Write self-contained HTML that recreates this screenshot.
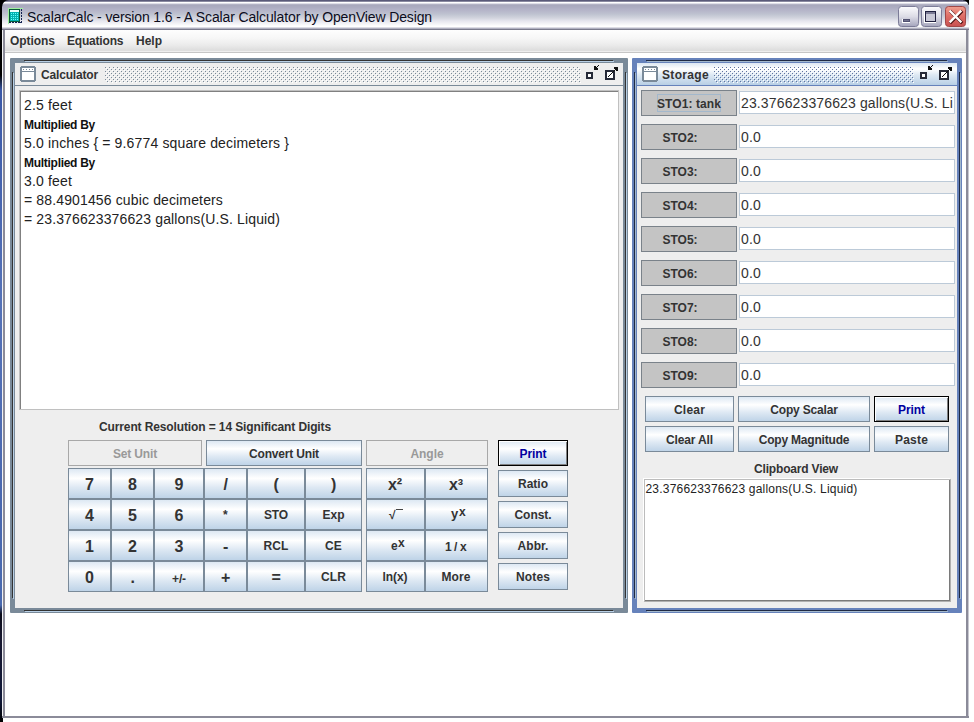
<!DOCTYPE html>
<html><head><meta charset="utf-8">
<style>
*{box-sizing:border-box;margin:0;padding:0}
html,body{width:974px;height:722px;overflow:hidden;background:#fff;font-family:"Liberation Sans",sans-serif;position:relative}
.a{position:absolute}
.t{position:absolute;white-space:nowrap}
</style></head><body>
<div class="a" style="left:0px;top:0px;width:3px;height:722px;background:linear-gradient(#000 0,#000 75px,#3a58a8 90px,#5572b8 300px,#4a68b0 500px,#4a6ab0 605px,#0a0a18 614px,#181830 640px,#101838 700px,#000 722px)"></div>
<div class="a" style="left:0px;top:0px;width:10px;height:8px;background:#000"></div>
<div class="a" style="left:963px;top:0px;width:6px;height:5px;background:#000"></div>
<div class="a" style="left:969px;top:0px;width:5px;height:722px;background:#fff"></div>
<div class="a" style="left:2px;top:0;width:967px;height:30px;border-radius:7px 7px 0 0;background:linear-gradient(#5a5a78 0px,#5a5a78 1px,#8a8aa0 1px,#8a8aa0 2px,#ffffff 2px,#ffffff 3px,#e0e0e8 3px,#e0e0e8 4px,#b8b8c8 4px,#a9a9bd 5.5px,#acacc0 7px,#b4b4c8 10px,#bec2d0 14px,#d2d4de 18px,#e6e6ee 21px,#f4f4f7 24px,#ffffff 26px,#ffffff 27px,#dcdce4 27px,#dcdce4 28px,#b0b0c0 28px,#b0b0c0 29px,#7a7a8c 29px,#7a7a8c 30px)"></div>
<div class="t" style="left:27px;top:8px;font-size:14px;line-height:18px;color:#0c0c1c;letter-spacing:-0.134px;">ScalarCalc - version 1.6 - A Scalar Calculator by OpenView Design</div>
<svg class="a" style="left:7px;top:7px" width="18" height="18" shape-rendering="crispEdges"><rect x="1" y="1" width="1" height="16" fill="#a0f0a0"/><rect x="1" y="1" width="15" height="1" fill="#a0f0a0"/><rect x="2" y="2" width="11" height="13" fill="#0a5a3a"/><rect x="3" y="3" width="9" height="2" fill="#e8ffff"/><rect x="3" y="5" width="9" height="9" fill="#00b0b0"/><path d="M4 6h1v1h-1zM6 6h1v1h-1zM8 6h1v1h-1zM10 6h1v1h-1zM4 8h1v1h-1zM6 8h1v1h-1zM8 8h1v1h-1zM10 8h1v1h-1zM4 10h1v1h-1zM6 10h1v1h-1zM8 10h1v1h-1zM10 10h1v1h-1zM4 12h1v1h-1zM6 12h1v1h-1zM8 12h1v1h-1zM10 12h1v1h-1z" fill="#60ffff"/><path d="M14 2h1v2h-1zM14 5h1v2h-1zM14 8h1v2h-1zM14 11h1v2h-1zM14 14h1v2h-1zM2 15h2v1h-2zM5 15h2v1h-2zM8 15h2v1h-2zM11 15h3v1h-3z" fill="#102050"/></svg>
<svg class="a" style="left:898px;top:6px" width="21" height="21"><defs><linearGradient id="gsil" x1="0" y1="0" x2="0" y2="1"><stop offset="0" stop-color="#fcfcfe"/><stop offset="0.5" stop-color="#dcdce6"/><stop offset="1" stop-color="#a4a4bc"/></linearGradient><linearGradient id="gclose" x1="0" y1="0" x2="0" y2="1"><stop offset="0" stop-color="#f0a090"/><stop offset="0.45" stop-color="#e07068"/><stop offset="1" stop-color="#c85050"/></linearGradient></defs><rect x="0.5" y="0.5" width="20" height="20" rx="3" fill="url(#gsil)" stroke="#7c7c98"/><rect x="4" y="13" width="8" height="4" fill="#fff"/><rect x="5" y="13" width="7" height="3" fill="#505070"/><rect x="6" y="14" width="5" height="1" fill="#70708c"/></svg>
<svg class="a" style="left:921px;top:6px" width="21" height="21"><defs><linearGradient id="gsil" x1="0" y1="0" x2="0" y2="1"><stop offset="0" stop-color="#fcfcfe"/><stop offset="0.5" stop-color="#dcdce6"/><stop offset="1" stop-color="#a4a4bc"/></linearGradient><linearGradient id="gclose" x1="0" y1="0" x2="0" y2="1"><stop offset="0" stop-color="#f0a090"/><stop offset="0.45" stop-color="#e07068"/><stop offset="1" stop-color="#c85050"/></linearGradient></defs><rect x="0.5" y="0.5" width="20" height="20" rx="3" fill="url(#gsil)" stroke="#7c7c98"/><rect x="3" y="5" width="12" height="12" fill="#fff"/><rect x="4" y="5" width="11" height="11" fill="#202040"/><rect x="5" y="6" width="9" height="2" fill="#7a7a94"/><rect x="5" y="8" width="9" height="7" fill="#c8c8d6"/></svg>
<svg class="a" style="left:945px;top:6px" width="21" height="21"><defs><linearGradient id="gsil" x1="0" y1="0" x2="0" y2="1"><stop offset="0" stop-color="#fcfcfe"/><stop offset="0.5" stop-color="#dcdce6"/><stop offset="1" stop-color="#a4a4bc"/></linearGradient><linearGradient id="gclose" x1="0" y1="0" x2="0" y2="1"><stop offset="0" stop-color="#f0a090"/><stop offset="0.45" stop-color="#e07068"/><stop offset="1" stop-color="#c85050"/></linearGradient></defs><rect x="0.5" y="0.5" width="20" height="20" rx="3" fill="url(#gclose)" stroke="#a04848"/><path d="M5.5 5.5L15.5 15.5M15.5 5.5L5.5 15.5" stroke="#4a1010" stroke-width="3.2" stroke-linecap="square" transform="translate(0.6,0.6)"/><path d="M5.5 5.5L15.5 15.5M15.5 5.5L5.5 15.5" stroke="#fff" stroke-width="2.4" stroke-linecap="square"/></svg>
<div class="a" style="left:2px;top:30px;width:3px;height:688px;background:#8b8b99;border-left:1px solid #f2f2f4"></div>
<div class="a" style="left:966px;top:30px;width:3px;height:688px;background:#8b8b99;border-right:1px solid #c8c8d0"></div>
<div class="a" style="left:2px;top:716px;width:967px;height:2px;background:#8b8b99"></div>
<div class="a" style="left:5px;top:30px;width:961px;height:23px;background:linear-gradient(#fefefe 0px,#f7f7f7 8px,#ebebeb 15px,#dedede 20px,#dedede 21px,#eeeeee 21px,#eeeeee 22px);border-bottom:1px solid #c6c6c6"></div>
<div class="t" style="left:10px;top:33px;font-size:12px;line-height:16px;font-weight:bold;color:#333;letter-spacing:-0.047px;">Options</div>
<div class="t" style="left:67px;top:33px;font-size:12px;line-height:16px;font-weight:bold;color:#333;letter-spacing:-0.193px;">Equations</div>
<div class="t" style="left:136px;top:33px;font-size:12px;line-height:16px;font-weight:bold;color:#333;letter-spacing:-0.001px;">Help</div>
<div class="a" style="left:5px;top:53px;width:961px;height:663px;background:#fff"></div>
<div class="a" style="left:10px;top:58px;width:618px;height:555px;background:#7a8a99;border-radius:1px"></div>
<div class="a" style="left:24px;top:60px;width:589px;height:1px;background:#333333"></div>
<div class="a" style="left:12px;top:72px;width:1px;height:526px;background:#333333"></div>
<div class="a" style="left:625px;top:72px;width:1px;height:526px;background:#333333"></div>
<div class="a" style="left:24px;top:610px;width:589px;height:1px;background:#333333"></div>
<div class="a" style="left:25px;top:61px;width:589px;height:1px;background:#b8cfe5"></div>
<div class="a" style="left:13px;top:73px;width:1px;height:526px;background:#b8cfe5"></div>
<div class="a" style="left:626px;top:73px;width:1px;height:526px;background:#b8cfe5"></div>
<div class="a" style="left:25px;top:611px;width:589px;height:1px;background:#b8cfe5"></div>
<div class="a" style="left:15px;top:63px;width:608px;height:545px;background:#eeeeee"></div>
<div class="a" style="left:15px;top:63px;width:608px;height:22px;background:#eeeeee"></div>
<div class="a" style="left:15px;top:85px;width:608px;height:1px;background:#7a8a99"></div>
<svg class="a" style="left:20px;top:66px" width="16" height="16" shape-rendering="crispEdges"><path d="M1 0h14v1h1v14h-1v1h-14v-1h-1v-14h1z" fill="#7a8a99"/><rect x="2" y="2" width="12" height="3" fill="#fff"/><rect x="2" y="6" width="12" height="8" fill="#fff"/><rect x="3" y="3" width="1" height="1" fill="#7a8a99"/><rect x="6" y="3" width="1" height="1" fill="#7a8a99"/><rect x="9" y="3" width="1" height="1" fill="#7a8a99"/><rect x="12" y="3" width="1" height="1" fill="#7a8a99"/></svg>
<div class="t" style="left:41px;top:67px;font-size:12px;line-height:16px;font-weight:bold;color:#333;letter-spacing:-0.176px;">Calculator</div>
<svg class="a" style="left:584px;top:63px" width="36" height="20" shape-rendering="crispEdges"><path d="M2 9h7v7h-7zM4 11v3h3v-3z" fill="#262a38" fill-rule="evenodd"/><rect x="4" y="11" width="3" height="3" fill="#fff"/><path d="M14 2h1v1h-1zM13 3h1v1h-1zM12 4h1v1h-1zM10 3h2v4h-2zM10 5h4v2h-4z" fill="#111"/><path d="M21 7h10v10h-10zM23 9v6h6v-6z" fill="#262a38" fill-rule="evenodd"/><rect x="23" y="9" width="6" height="6" fill="#fff"/><path d="M24 13h1v1h-1zM25 12h1v1h-1zM26 11h1v1h-1zM27 10h1v1h-1zM28 9h1v1h-1zM29 8h1v1h-1zM30 7h1v1h-1zM31 6h1v1h-1zM30 4h4v2h-4zM32 4h2v4h-2z" fill="#111"/></svg>
<svg class="a" style="left:105px;top:67px" width="476" height="16" shape-rendering="crispEdges"><defs><pattern id="bp1" width="4" height="4" patternUnits="userSpaceOnUse"><rect x="0" y="0" width="1" height="1" fill="#7a8a99"/><rect x="2" y="2" width="1" height="1" fill="#7a8a99"/><rect x="1" y="1" width="1" height="1" fill="#fff"/><rect x="3" y="3" width="1" height="1" fill="#fff"/></pattern></defs><rect width="476" height="16" fill="url(#bp1)"/></svg>
<div class="a" style="left:632px;top:58px;width:330px;height:555px;background:#6682bb;border-radius:1px"></div>
<div class="a" style="left:646px;top:60px;width:301px;height:1px;background:#1f2a44"></div>
<div class="a" style="left:634px;top:72px;width:1px;height:526px;background:#1f2a44"></div>
<div class="a" style="left:959px;top:72px;width:1px;height:526px;background:#1f2a44"></div>
<div class="a" style="left:646px;top:610px;width:301px;height:1px;background:#1f2a44"></div>
<div class="a" style="left:647px;top:61px;width:301px;height:1px;background:#a3b8cc"></div>
<div class="a" style="left:635px;top:73px;width:1px;height:526px;background:#a3b8cc"></div>
<div class="a" style="left:960px;top:73px;width:1px;height:526px;background:#a3b8cc"></div>
<div class="a" style="left:647px;top:611px;width:301px;height:1px;background:#a3b8cc"></div>
<div class="a" style="left:637px;top:63px;width:320px;height:545px;background:#eeeeee"></div>
<div class="a" style="left:637px;top:63px;width:320px;height:22px;background:linear-gradient(#dde8f3 0px,#ffffff 6px,#dde8f3 12px,#b8cfe5 22px)"></div>
<div class="a" style="left:637px;top:85px;width:320px;height:1px;background:#6682bb"></div>
<svg class="a" style="left:642px;top:66px" width="16" height="16" shape-rendering="crispEdges"><path d="M1 0h14v1h1v14h-1v1h-14v-1h-1v-14h1z" fill="#7a8a99"/><rect x="2" y="2" width="12" height="3" fill="#fff"/><rect x="2" y="6" width="12" height="8" fill="#fff"/><rect x="3" y="3" width="1" height="1" fill="#7a8a99"/><rect x="6" y="3" width="1" height="1" fill="#7a8a99"/><rect x="9" y="3" width="1" height="1" fill="#7a8a99"/><rect x="12" y="3" width="1" height="1" fill="#7a8a99"/></svg>
<div class="t" style="left:662px;top:67px;font-size:12px;line-height:16px;font-weight:bold;color:#333;letter-spacing:0.332px;">Storage</div>
<svg class="a" style="left:918px;top:63px" width="36" height="20" shape-rendering="crispEdges"><path d="M2 9h7v7h-7zM4 11v3h3v-3z" fill="#262a38" fill-rule="evenodd"/><rect x="4" y="11" width="3" height="3" fill="#fff"/><path d="M14 2h1v1h-1zM13 3h1v1h-1zM12 4h1v1h-1zM10 3h2v4h-2zM10 5h4v2h-4z" fill="#111"/><path d="M21 7h10v10h-10zM23 9v6h6v-6z" fill="#262a38" fill-rule="evenodd"/><rect x="23" y="9" width="6" height="6" fill="#fff"/><path d="M24 13h1v1h-1zM25 12h1v1h-1zM26 11h1v1h-1zM27 10h1v1h-1zM28 9h1v1h-1zM29 8h1v1h-1zM30 7h1v1h-1zM31 6h1v1h-1zM30 4h4v2h-4zM32 4h2v4h-2z" fill="#111"/></svg>
<svg class="a" style="left:714px;top:67px" width="200" height="16" shape-rendering="crispEdges"><defs><pattern id="bp2" width="4" height="4" patternUnits="userSpaceOnUse"><rect x="0" y="0" width="1" height="1" fill="#5f739f"/><rect x="2" y="2" width="1" height="1" fill="#5f739f"/><rect x="1" y="1" width="1" height="1" fill="#fff"/><rect x="3" y="3" width="1" height="1" fill="#fff"/></pattern></defs><rect width="200" height="16" fill="url(#bp2)"/></svg>
<div class="a" style="left:19px;top:90px;width:600px;height:320px;background:#fff;border:1px solid #c0c0c0;box-shadow:inset 1px 1px 0 #808080"></div>
<div class="t" style="left:24px;top:96px;font-size:14px;line-height:18px;color:#222;letter-spacing:0.162px;">2.5 feet</div>
<div class="t" style="left:24px;top:117px;font-size:12px;line-height:16px;font-weight:bold;color:#111;letter-spacing:-0.282px;">Multiplied By</div>
<div class="t" style="left:24px;top:134px;font-size:14px;line-height:18px;color:#222;letter-spacing:0.152px;">5.0 inches { = 9.6774 square decimeters }</div>
<div class="t" style="left:24px;top:155px;font-size:12px;line-height:16px;font-weight:bold;color:#111;letter-spacing:-0.282px;">Multiplied By</div>
<div class="t" style="left:24px;top:172px;font-size:14px;line-height:18px;color:#222;letter-spacing:0.162px;">3.0 feet</div>
<div class="t" style="left:24px;top:191px;font-size:14px;line-height:18px;color:#222;letter-spacing:0.139px;">= 88.4901456 cubic decimeters</div>
<div class="t" style="left:24px;top:210px;font-size:14px;line-height:18px;color:#222;letter-spacing:0.131px;">= 23.376623376623 gallons(U.S. Liquid)</div>
<div class="t" style="left:99px;top:419px;font-size:12px;line-height:16px;font-weight:bold;color:#333;letter-spacing:-0.120px;">Current Resolution = 14 Significant Digits</div>
<div class="a" style="left:68px;top:440px;width:134px;height:26px;background:#eeeeee;border:1px solid #a8a8a8"></div>
<div class="t" style="left:113.01px;top:446px;font-size:12px;line-height:16px;font-weight:bold;color:#999;letter-spacing:-0.170px;">Set Unit</div>
<div class="a" style="left:206px;top:440px;width:156px;height:26px;background:linear-gradient(#dde8f3 0,#ffffff 7.8px,#dde8f3 15.6px,#b8cfe5 26px);border:1px solid #7a8a99"></div>
<div class="t" style="left:249.08px;top:446px;font-size:12px;line-height:16px;font-weight:bold;color:#333;letter-spacing:-0.180px;">Convert Unit</div>
<div class="a" style="left:366px;top:440px;width:122px;height:26px;background:#eeeeee;border:1px solid #a8a8a8"></div>
<div class="t" style="left:410.5px;top:446px;font-size:12px;line-height:16px;font-weight:bold;color:#999;letter-spacing:-0.067px;">Angle</div>
<div class="a" style="left:498px;top:440px;width:70px;height:26px;background:linear-gradient(#dde8f3 0,#ffffff 7.8px,#dde8f3 15.6px,#b8cfe5 26px);border:1px solid #000;box-shadow:inset 1px 1px 0 #fff,inset -1px -1px 0 #808080"></div>
<div class="t" style="left:519.5px;top:446px;font-size:12px;line-height:16px;font-weight:bold;color:#0000a0;letter-spacing:-0.067px;">Print</div>
<div class="a" style="left:68px;top:468px;width:43px;height:31px;background:linear-gradient(#dde8f3 0,#ffffff 9.3px,#dde8f3 18.6px,#b8cfe5 31px);border:1px solid #7a8a99"></div>
<div class="t" style="left:85.0px;top:475px;font-size:16px;line-height:20px;font-weight:bold;color:#333;letter-spacing:0.102px;">7</div>
<div class="a" style="left:111px;top:468px;width:43px;height:31px;background:linear-gradient(#dde8f3 0,#ffffff 9.3px,#dde8f3 18.6px,#b8cfe5 31px);border:1px solid #7a8a99"></div>
<div class="t" style="left:128.0px;top:475px;font-size:16px;line-height:20px;font-weight:bold;color:#333;letter-spacing:0.102px;">8</div>
<div class="a" style="left:154px;top:468px;width:50px;height:31px;background:linear-gradient(#dde8f3 0,#ffffff 9.3px,#dde8f3 18.6px,#b8cfe5 31px);border:1px solid #7a8a99"></div>
<div class="t" style="left:174.5px;top:475px;font-size:16px;line-height:20px;font-weight:bold;color:#333;letter-spacing:0.102px;">9</div>
<div class="a" style="left:204px;top:468px;width:43px;height:31px;background:linear-gradient(#dde8f3 0,#ffffff 9.3px,#dde8f3 18.6px,#b8cfe5 31px);border:1px solid #7a8a99"></div>
<div class="t" style="left:223.5px;top:475px;font-size:16px;line-height:20px;font-weight:bold;color:#333;letter-spacing:-0.445px;">/</div>
<div class="a" style="left:247px;top:468px;width:58px;height:31px;background:linear-gradient(#dde8f3 0,#ffffff 9.3px,#dde8f3 18.6px,#b8cfe5 31px);border:1px solid #7a8a99"></div>
<div class="t" style="left:273.5px;top:475px;font-size:16px;line-height:20px;font-weight:bold;color:#333;letter-spacing:-0.328px;">(</div>
<div class="a" style="left:305px;top:468px;width:57px;height:31px;background:linear-gradient(#dde8f3 0,#ffffff 9.3px,#dde8f3 18.6px,#b8cfe5 31px);border:1px solid #7a8a99"></div>
<div class="t" style="left:331.0px;top:475px;font-size:16px;line-height:20px;font-weight:bold;color:#333;letter-spacing:-0.328px;">)</div>
<div class="a" style="left:68px;top:499px;width:43px;height:31px;background:linear-gradient(#dde8f3 0,#ffffff 9.3px,#dde8f3 18.6px,#b8cfe5 31px);border:1px solid #7a8a99"></div>
<div class="t" style="left:85.0px;top:506px;font-size:16px;line-height:20px;font-weight:bold;color:#333;letter-spacing:0.102px;">4</div>
<div class="a" style="left:111px;top:499px;width:43px;height:31px;background:linear-gradient(#dde8f3 0,#ffffff 9.3px,#dde8f3 18.6px,#b8cfe5 31px);border:1px solid #7a8a99"></div>
<div class="t" style="left:128.0px;top:506px;font-size:16px;line-height:20px;font-weight:bold;color:#333;letter-spacing:0.102px;">5</div>
<div class="a" style="left:154px;top:499px;width:50px;height:31px;background:linear-gradient(#dde8f3 0,#ffffff 9.3px,#dde8f3 18.6px,#b8cfe5 31px);border:1px solid #7a8a99"></div>
<div class="t" style="left:174.5px;top:506px;font-size:16px;line-height:20px;font-weight:bold;color:#333;letter-spacing:0.102px;">6</div>
<div class="a" style="left:204px;top:499px;width:43px;height:31px;background:linear-gradient(#dde8f3 0,#ffffff 9.3px,#dde8f3 18.6px,#b8cfe5 31px);border:1px solid #7a8a99"></div>
<div class="t" style="left:223.0px;top:507px;font-size:12px;line-height:16px;font-weight:bold;color:#333;letter-spacing:0.330px;">*</div>
<div class="a" style="left:247px;top:499px;width:58px;height:31px;background:linear-gradient(#dde8f3 0,#ffffff 9.3px,#dde8f3 18.6px,#b8cfe5 31px);border:1px solid #7a8a99"></div>
<div class="t" style="left:264.0px;top:507px;font-size:12px;line-height:16px;font-weight:bold;color:#333;letter-spacing:-0.150px;">STO</div>
<div class="a" style="left:305px;top:499px;width:57px;height:31px;background:linear-gradient(#dde8f3 0,#ffffff 9.3px,#dde8f3 18.6px,#b8cfe5 31px);border:1px solid #7a8a99"></div>
<div class="t" style="left:322.5px;top:507px;font-size:12px;line-height:16px;font-weight:bold;color:#333;letter-spacing:-0.003px;">Exp</div>
<div class="a" style="left:68px;top:530px;width:43px;height:31px;background:linear-gradient(#dde8f3 0,#ffffff 9.3px,#dde8f3 18.6px,#b8cfe5 31px);border:1px solid #7a8a99"></div>
<div class="t" style="left:85.0px;top:537px;font-size:16px;line-height:20px;font-weight:bold;color:#333;letter-spacing:0.102px;">1</div>
<div class="a" style="left:111px;top:530px;width:43px;height:31px;background:linear-gradient(#dde8f3 0,#ffffff 9.3px,#dde8f3 18.6px,#b8cfe5 31px);border:1px solid #7a8a99"></div>
<div class="t" style="left:128.0px;top:537px;font-size:16px;line-height:20px;font-weight:bold;color:#333;letter-spacing:0.102px;">2</div>
<div class="a" style="left:154px;top:530px;width:50px;height:31px;background:linear-gradient(#dde8f3 0,#ffffff 9.3px,#dde8f3 18.6px,#b8cfe5 31px);border:1px solid #7a8a99"></div>
<div class="t" style="left:174.5px;top:537px;font-size:16px;line-height:20px;font-weight:bold;color:#333;letter-spacing:0.102px;">3</div>
<div class="a" style="left:204px;top:530px;width:43px;height:31px;background:linear-gradient(#dde8f3 0,#ffffff 9.3px,#dde8f3 18.6px,#b8cfe5 31px);border:1px solid #7a8a99"></div>
<div class="t" style="left:223.0px;top:537px;font-size:16px;line-height:20px;font-weight:bold;color:#333;letter-spacing:-0.328px;">-</div>
<div class="a" style="left:247px;top:530px;width:58px;height:31px;background:linear-gradient(#dde8f3 0,#ffffff 9.3px,#dde8f3 18.6px,#b8cfe5 31px);border:1px solid #7a8a99"></div>
<div class="t" style="left:263.5px;top:538px;font-size:12px;line-height:16px;font-weight:bold;color:#333;letter-spacing:0.113px;">RCL</div>
<div class="a" style="left:305px;top:530px;width:57px;height:31px;background:linear-gradient(#dde8f3 0,#ffffff 9.3px,#dde8f3 18.6px,#b8cfe5 31px);border:1px solid #7a8a99"></div>
<div class="t" style="left:325.0px;top:538px;font-size:12px;line-height:16px;font-weight:bold;color:#333;letter-spacing:0.165px;">CE</div>
<div class="a" style="left:68px;top:561px;width:43px;height:31px;background:linear-gradient(#dde8f3 0,#ffffff 9.3px,#dde8f3 18.6px,#b8cfe5 31px);border:1px solid #7a8a99"></div>
<div class="t" style="left:85.0px;top:568px;font-size:16px;line-height:20px;font-weight:bold;color:#333;letter-spacing:0.102px;">0</div>
<div class="a" style="left:111px;top:561px;width:43px;height:31px;background:linear-gradient(#dde8f3 0,#ffffff 9.3px,#dde8f3 18.6px,#b8cfe5 31px);border:1px solid #7a8a99"></div>
<div class="t" style="left:130.5px;top:568px;font-size:16px;line-height:20px;font-weight:bold;color:#333;letter-spacing:-0.445px;">.</div>
<div class="a" style="left:154px;top:561px;width:50px;height:31px;background:linear-gradient(#dde8f3 0,#ffffff 9.3px,#dde8f3 18.6px,#b8cfe5 31px);border:1px solid #7a8a99"></div>
<div class="t" style="left:172.0px;top:571px;font-size:12px;line-height:16px;font-weight:bold;color:#333;letter-spacing:-0.113px;">+/-</div>
<div class="a" style="left:204px;top:561px;width:43px;height:31px;background:linear-gradient(#dde8f3 0,#ffffff 9.3px,#dde8f3 18.6px,#b8cfe5 31px);border:1px solid #7a8a99"></div>
<div class="t" style="left:221.0px;top:568px;font-size:16px;line-height:20px;font-weight:bold;color:#333;letter-spacing:-0.344px;">+</div>
<div class="a" style="left:247px;top:561px;width:58px;height:31px;background:linear-gradient(#dde8f3 0,#ffffff 9.3px,#dde8f3 18.6px,#b8cfe5 31px);border:1px solid #7a8a99"></div>
<div class="t" style="left:271.5px;top:568px;font-size:16px;line-height:20px;font-weight:bold;color:#333;letter-spacing:-0.344px;">=</div>
<div class="a" style="left:305px;top:561px;width:57px;height:31px;background:linear-gradient(#dde8f3 0,#ffffff 9.3px,#dde8f3 18.6px,#b8cfe5 31px);border:1px solid #7a8a99"></div>
<div class="t" style="left:321.0px;top:569px;font-size:12px;line-height:16px;font-weight:bold;color:#333;letter-spacing:0.113px;">CLR</div>
<div class="a" style="left:366px;top:468px;width:59px;height:31px;background:linear-gradient(#dde8f3 0,#ffffff 9.3px,#dde8f3 18.6px,#b8cfe5 31px);border:1px solid #7a8a99"></div>
<div class="t" style="left:366px;top:468px;width:59px;text-align:center;font-size:12px;font-weight:bold;color:#333"></div>
<div class="a" style="left:425px;top:468px;width:63px;height:31px;background:linear-gradient(#dde8f3 0,#ffffff 9.3px,#dde8f3 18.6px,#b8cfe5 31px);border:1px solid #7a8a99"></div>
<div class="t" style="left:425px;top:468px;width:63px;text-align:center;font-size:12px;font-weight:bold;color:#333"></div>
<div class="a" style="left:366px;top:499px;width:59px;height:31px;background:linear-gradient(#dde8f3 0,#ffffff 9.3px,#dde8f3 18.6px,#b8cfe5 31px);border:1px solid #7a8a99"></div>
<div class="t" style="left:366px;top:499px;width:59px;text-align:center;font-size:12px;font-weight:bold;color:#333"></div>
<div class="a" style="left:425px;top:499px;width:63px;height:31px;background:linear-gradient(#dde8f3 0,#ffffff 9.3px,#dde8f3 18.6px,#b8cfe5 31px);border:1px solid #7a8a99"></div>
<div class="t" style="left:425px;top:499px;width:63px;text-align:center;font-size:12px;font-weight:bold;color:#333"></div>
<div class="a" style="left:366px;top:530px;width:59px;height:31px;background:linear-gradient(#dde8f3 0,#ffffff 9.3px,#dde8f3 18.6px,#b8cfe5 31px);border:1px solid #7a8a99"></div>
<div class="t" style="left:366px;top:530px;width:59px;text-align:center;font-size:12px;font-weight:bold;color:#333"></div>
<div class="a" style="left:425px;top:530px;width:63px;height:31px;background:linear-gradient(#dde8f3 0,#ffffff 9.3px,#dde8f3 18.6px,#b8cfe5 31px);border:1px solid #7a8a99"></div>
<div class="t" style="left:425px;top:530px;width:63px;text-align:center;font-size:12px;font-weight:bold;color:#333"></div>
<div class="a" style="left:366px;top:561px;width:59px;height:31px;background:linear-gradient(#dde8f3 0,#ffffff 9.3px,#dde8f3 18.6px,#b8cfe5 31px);border:1px solid #7a8a99"></div>
<div class="t" style="left:366px;top:561px;width:59px;text-align:center;font-size:12px;font-weight:bold;color:#333"></div>
<div class="a" style="left:425px;top:561px;width:63px;height:31px;background:linear-gradient(#dde8f3 0,#ffffff 9.3px,#dde8f3 18.6px,#b8cfe5 31px);border:1px solid #7a8a99"></div>
<div class="t" style="left:425px;top:561px;width:63px;text-align:center;font-size:12px;font-weight:bold;color:#333"></div>
<div class="t" style="left:388px;top:475px;font-size:16px;line-height:20px;font-weight:bold;color:#333;letter-spacing:-0.113px;">x²</div>
<div class="t" style="left:449px;top:475px;font-size:16px;line-height:20px;font-weight:bold;color:#333;letter-spacing:-0.113px;">x³</div>
<div class="t" style="left:389px;top:507px;font-size:12px;line-height:16px;font-weight:bold;color:#333;letter-spacing:0.414px;">√</div>
<div class="a" style="left:396px;top:509px;width:7px;height:1px;background:#444"></div>
<div class="t" style="left:451px;top:505px;font-size:13px;line-height:17px;font-weight:bold;color:#333;letter-spacing:-0.230px;">y</div>
<div class="t" style="left:459px;top:504px;font-size:12px;line-height:16px;font-weight:bold;color:#333;letter-spacing:0.326px;">x</div>
<div class="t" style="left:391px;top:538px;font-size:12px;line-height:16px;font-weight:bold;color:#333;letter-spacing:0.326px;">e</div>
<div class="t" style="left:398px;top:535px;font-size:12px;line-height:16px;font-weight:bold;color:#333;letter-spacing:0.326px;">x</div>
<div class="t" style="left:445px;top:539px;font-size:12px;line-height:16px;font-weight:bold;color:#333;letter-spacing:2.439px;">1/x</div>
<div class="t" style="left:382.5px;top:569px;font-size:12px;line-height:16px;font-weight:bold;color:#333;letter-spacing:-0.066px;">ln(x)</div>
<div class="t" style="left:441.5px;top:569px;font-size:12px;line-height:16px;font-weight:bold;color:#333;letter-spacing:0.083px;">More</div>
<div class="a" style="left:498px;top:470px;width:70px;height:27px;background:linear-gradient(#dde8f3 0,#ffffff 8.1px,#dde8f3 16.2px,#b8cfe5 27px);border:1px solid #7a8a99"></div>
<div class="t" style="left:518.0px;top:476px;font-size:12px;line-height:16px;font-weight:bold;color:#333;letter-spacing:0.000px;">Ratio</div>
<div class="a" style="left:498px;top:501px;width:70px;height:27px;background:linear-gradient(#dde8f3 0,#ffffff 8.1px,#dde8f3 16.2px,#b8cfe5 27px);border:1px solid #7a8a99"></div>
<div class="t" style="left:514.5px;top:507px;font-size:12px;line-height:16px;font-weight:bold;color:#333;letter-spacing:-0.055px;">Const.</div>
<div class="a" style="left:498px;top:532px;width:70px;height:27px;background:linear-gradient(#dde8f3 0,#ffffff 8.1px,#dde8f3 16.2px,#b8cfe5 27px);border:1px solid #7a8a99"></div>
<div class="t" style="left:517.5px;top:538px;font-size:12px;line-height:16px;font-weight:bold;color:#333;letter-spacing:0.066px;">Abbr.</div>
<div class="a" style="left:498px;top:563px;width:70px;height:27px;background:linear-gradient(#dde8f3 0,#ffffff 8.1px,#dde8f3 16.2px,#b8cfe5 27px);border:1px solid #7a8a99"></div>
<div class="t" style="left:516.0px;top:569px;font-size:12px;line-height:16px;font-weight:bold;color:#333;letter-spacing:0.132px;">Notes</div>
<div class="a" style="left:641px;top:90px;width:96px;height:26px;background:#c4c4c4;border:1px solid #7a828a"></div>
<div class="a" style="left:739px;top:91px;width:216px;height:23px;background:#fff;border:1px solid #bccad8"></div>
<div class="a" style="left:657px;top:94px;width:64px;height:18px;border:1px solid #a3b8cc"></div>
<div class="t" style="left:657px;top:96px;font-size:12px;line-height:16px;font-weight:bold;color:#333;letter-spacing:0.087px;">STO1: tank</div>
<div class="t" style="left:741px;top:94px;font-size:14px;line-height:18px;color:#333;letter-spacing:0.135px;">23.376623376623 gallons(U.S. Li</div>
<div class="a" style="left:641px;top:124px;width:96px;height:26px;background:#c4c4c4;border:1px solid #7a828a"></div>
<div class="a" style="left:739px;top:125px;width:216px;height:23px;background:#fff;border:1px solid #bccad8"></div>
<div class="t" style="left:662.5px;top:130px;font-size:12px;line-height:16px;font-weight:bold;color:#333;letter-spacing:-0.024px;">STO2:</div>
<div class="t" style="left:741px;top:128px;font-size:14px;line-height:18px;color:#333;letter-spacing:0.179px;">0.0</div>
<div class="a" style="left:641px;top:158px;width:96px;height:26px;background:#c4c4c4;border:1px solid #7a828a"></div>
<div class="a" style="left:739px;top:159px;width:216px;height:23px;background:#fff;border:1px solid #bccad8"></div>
<div class="t" style="left:662.5px;top:164px;font-size:12px;line-height:16px;font-weight:bold;color:#333;letter-spacing:-0.024px;">STO3:</div>
<div class="t" style="left:741px;top:162px;font-size:14px;line-height:18px;color:#333;letter-spacing:0.179px;">0.0</div>
<div class="a" style="left:641px;top:192px;width:96px;height:26px;background:#c4c4c4;border:1px solid #7a828a"></div>
<div class="a" style="left:739px;top:193px;width:216px;height:23px;background:#fff;border:1px solid #bccad8"></div>
<div class="t" style="left:662.5px;top:198px;font-size:12px;line-height:16px;font-weight:bold;color:#333;letter-spacing:-0.024px;">STO4:</div>
<div class="t" style="left:741px;top:196px;font-size:14px;line-height:18px;color:#333;letter-spacing:0.179px;">0.0</div>
<div class="a" style="left:641px;top:226px;width:96px;height:26px;background:#c4c4c4;border:1px solid #7a828a"></div>
<div class="a" style="left:739px;top:227px;width:216px;height:23px;background:#fff;border:1px solid #bccad8"></div>
<div class="t" style="left:662.5px;top:232px;font-size:12px;line-height:16px;font-weight:bold;color:#333;letter-spacing:-0.024px;">STO5:</div>
<div class="t" style="left:741px;top:230px;font-size:14px;line-height:18px;color:#333;letter-spacing:0.179px;">0.0</div>
<div class="a" style="left:641px;top:260px;width:96px;height:26px;background:#c4c4c4;border:1px solid #7a828a"></div>
<div class="a" style="left:739px;top:261px;width:216px;height:23px;background:#fff;border:1px solid #bccad8"></div>
<div class="t" style="left:662.5px;top:266px;font-size:12px;line-height:16px;font-weight:bold;color:#333;letter-spacing:-0.024px;">STO6:</div>
<div class="t" style="left:741px;top:264px;font-size:14px;line-height:18px;color:#333;letter-spacing:0.179px;">0.0</div>
<div class="a" style="left:641px;top:294px;width:96px;height:26px;background:#c4c4c4;border:1px solid #7a828a"></div>
<div class="a" style="left:739px;top:295px;width:216px;height:23px;background:#fff;border:1px solid #bccad8"></div>
<div class="t" style="left:662.5px;top:300px;font-size:12px;line-height:16px;font-weight:bold;color:#333;letter-spacing:-0.024px;">STO7:</div>
<div class="t" style="left:741px;top:298px;font-size:14px;line-height:18px;color:#333;letter-spacing:0.179px;">0.0</div>
<div class="a" style="left:641px;top:328px;width:96px;height:26px;background:#c4c4c4;border:1px solid #7a828a"></div>
<div class="a" style="left:739px;top:329px;width:216px;height:23px;background:#fff;border:1px solid #bccad8"></div>
<div class="t" style="left:662.5px;top:334px;font-size:12px;line-height:16px;font-weight:bold;color:#333;letter-spacing:-0.024px;">STO8:</div>
<div class="t" style="left:741px;top:332px;font-size:14px;line-height:18px;color:#333;letter-spacing:0.179px;">0.0</div>
<div class="a" style="left:641px;top:362px;width:96px;height:26px;background:#c4c4c4;border:1px solid #7a828a"></div>
<div class="a" style="left:739px;top:363px;width:216px;height:23px;background:#fff;border:1px solid #bccad8"></div>
<div class="t" style="left:662.5px;top:368px;font-size:12px;line-height:16px;font-weight:bold;color:#333;letter-spacing:-0.024px;">STO9:</div>
<div class="t" style="left:741px;top:366px;font-size:14px;line-height:18px;color:#333;letter-spacing:0.179px;">0.0</div>
<div class="a" style="left:645px;top:396px;width:89px;height:26px;background:linear-gradient(#dde8f3 0,#ffffff 7.8px,#dde8f3 15.6px,#b8cfe5 26px);border:1px solid #7a8a99"></div>
<div class="t" style="left:674.0px;top:402px;font-size:12px;line-height:16px;font-weight:bold;color:#333;letter-spacing:0.196px;">Clear</div>
<div class="a" style="left:645px;top:426px;width:89px;height:26px;background:linear-gradient(#dde8f3 0,#ffffff 7.8px,#dde8f3 15.6px,#b8cfe5 26px);border:1px solid #7a8a99"></div>
<div class="t" style="left:666.1px;top:432px;font-size:12px;line-height:16px;font-weight:bold;color:#333;letter-spacing:-0.161px;">Clear All</div>
<div class="a" style="left:738px;top:396px;width:132px;height:26px;background:linear-gradient(#dde8f3 0,#ffffff 7.8px,#dde8f3 15.6px,#b8cfe5 26px);border:1px solid #7a8a99"></div>
<div class="t" style="left:770.36px;top:402px;font-size:12px;line-height:16px;font-weight:bold;color:#333;letter-spacing:-0.189px;">Copy Scalar</div>
<div class="a" style="left:738px;top:426px;width:132px;height:26px;background:linear-gradient(#dde8f3 0,#ffffff 7.8px,#dde8f3 15.6px,#b8cfe5 26px);border:1px solid #7a8a99"></div>
<div class="t" style="left:758.74px;top:432px;font-size:12px;line-height:16px;font-weight:bold;color:#333;letter-spacing:-0.200px;">Copy Magnitude</div>
<div class="a" style="left:874px;top:396px;width:75px;height:26px;background:linear-gradient(#dde8f3 0,#ffffff 7.8px,#dde8f3 15.6px,#b8cfe5 26px);border:1px solid #000;box-shadow:inset 1px 1px 0 #fff,inset -1px -1px 0 #808080"></div>
<div class="t" style="left:898.0px;top:402px;font-size:12px;line-height:16px;font-weight:bold;color:#0000a0;letter-spacing:-0.067px;">Print</div>
<div class="a" style="left:874px;top:426px;width:75px;height:26px;background:linear-gradient(#dde8f3 0,#ffffff 7.8px,#dde8f3 15.6px,#b8cfe5 26px);border:1px solid #7a8a99"></div>
<div class="t" style="left:895.0px;top:432px;font-size:12px;line-height:16px;font-weight:bold;color:#333;letter-spacing:0.196px;">Paste</div>
<div class="t" style="left:754.07px;top:461px;font-size:12px;line-height:16px;font-weight:bold;color:#333;letter-spacing:-0.185px;">Clipboard View</div>
<div class="a" style="left:644px;top:479px;width:307px;height:123px;background:#fff;border:1px solid #bcbcbc;border-right-color:#b0b0b0;border-bottom-color:#b0b0b0;box-shadow:inset -1px -1px 0 #7a7a7a,-1px -1px 0 #fff"></div>
<div class="t" style="left:645.5px;top:481px;font-size:12px;line-height:16px;color:#222;letter-spacing:0.199px;">23.376623376623 gallons(U.S. Liquid)</div>
</body></html>
